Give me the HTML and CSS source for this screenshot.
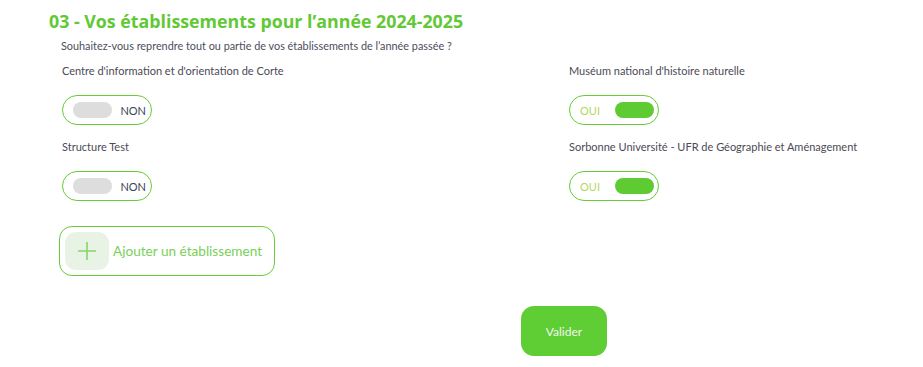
FILE: index.html
```html
<!DOCTYPE html>
<html lang="fr">
<head>
<meta charset="utf-8">
<link rel="stylesheet" href="styles.css">
</head>
<body>
<section class="section">
  <h2 class="title">03 - Vos établissements pour l’année 2024-2025</h2>
  <p class="subtitle">Souhaitez-vous reprendre tout ou partie de vos établissements de l’année passée ?</p>
  <div class="grid">
    <div class="item">
      <div class="label">Centre d'information et d'orientation de Corte</div>
      <div class="toggle off"><span class="knob"></span><span class="state">NON</span></div>
    </div>
    <div class="item">
      <div class="label">Muséum national d'histoire naturelle</div>
      <div class="toggle on"><span class="state">OUI</span><span class="knob"></span></div>
    </div>
    <div class="item">
      <div class="label">Structure Test</div>
      <div class="toggle off"><span class="knob"></span><span class="state">NON</span></div>
    </div>
    <div class="item">
      <div class="label">Sorbonne Université - UFR de Géographie et Aménagement</div>
      <div class="toggle on"><span class="state">OUI</span><span class="knob"></span></div>
    </div>
  </div>
  <button class="add" type="button">
    <span class="plus"><svg width="20" height="20" viewBox="0 0 20 20"><path d="M10 1v18M1 10h18" stroke="#86d46a" stroke-width="1.6" fill="none"/></svg></span>
    <span class="add-text">Ajouter un établissement</span>
  </button>
  <div class="actions">
    <button class="submit" type="button">Valider</button>
  </div>
</section>
</body>
</html>
```
FILE: styles.css
```css
* { box-sizing: border-box; }
body {
  margin: 0;
  background: #fff;
  font-family: "Lato", "Open Sans", sans-serif;
  color: #4a4a55;
}
.section {
  padding: 9px 0 0 49px;
}
.title {
  margin: 0;
  font-family: "Open Sans", sans-serif;
  font-weight: 700;
  font-size: 17.8px;
  line-height: 24px;
  color: #62c836;
}
.subtitle {
  margin: 6px 0 0 12px;
  font-size: 10.85px;
  line-height: 14px;
  color: #4b4e5c;
}
.grid {
  display: grid;
  grid-template-columns: 507px 1fr;
  padding-left: 13px;
  margin-top: 8px;
}
.item {
  display: flex;
  flex-direction: column;
  align-items: flex-start;
  height: 76px;
}
.label {
  font-size: 11px;
  line-height: 14px;
  margin-top: 3px;
  color: #4a4a55;
}
.toggle {
  margin-top: 17px;
  width: 90px;
  height: 30px;
  border: 1px solid #66cc3a;
  border-radius: 15px;
  display: flex;
  align-items: center;
  justify-content: space-between;
  padding: 0 5px 0 10px;
  font-size: 11px;
}
.toggle.on { padding: 0 4px 0 10px; }
.knob {
  flex-shrink: 0;
  width: 39px;
  height: 16px;
  border-radius: 8px;
  background: #dddddd;
}
.toggle.on .knob { background: #5fcb32; }
.toggle.off .state { color: #3d3f57; }
.toggle.on .state { color: #b5d75c; }
.add {
  margin: 13px 0 0 10px;
  width: 216px;
  height: 50px;
  border: 1px solid #66cc3a;
  border-radius: 13px;
  background: #fff;
  display: flex;
  align-items: center;
  padding: 0 0 0 5px;
  gap: 4px;
  font-family: inherit;
  cursor: pointer;
}
.plus {
  width: 44px;
  height: 38px;
  border-radius: 11px;
  background: #e8f3e6;
  display: flex;
  align-items: center;
  justify-content: center;
}
.add-text {
  font-size: 13.6px;
  color: #79d058;
}
.actions {
  margin-top: 30px;
  padding-left: 472px;
}
.submit {
  width: 86px;
  height: 50px;
  border: none;
  border-radius: 13px;
  background: #5fcd34;
  color: #f2f8ee;
  font-family: inherit;
  font-size: 12px;
  cursor: pointer;
}
```
